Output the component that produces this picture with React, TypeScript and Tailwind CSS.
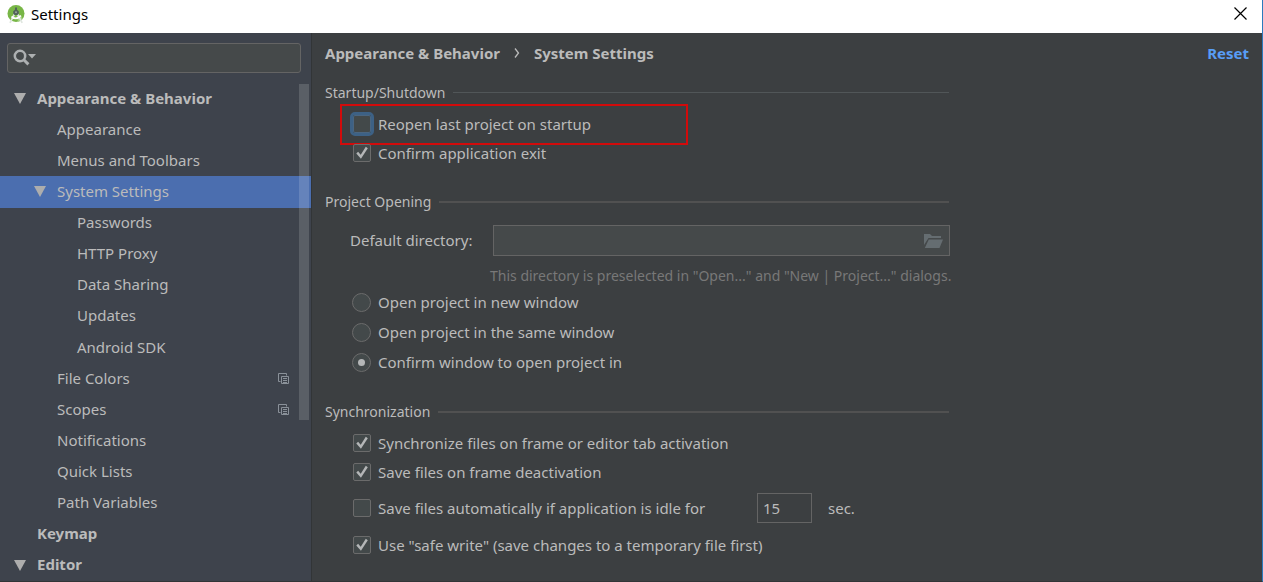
import { useState, type ReactNode } from "react";

type TreeItem = {
  label: string;
  level: 0 | 1 | 2;
  open?: boolean;
  selected?: boolean;
  projectLevel?: boolean;
};

const TREE: TreeItem[] = [
  { label: "Appearance & Behavior", level: 0, open: true },
  { label: "Appearance", level: 1 },
  { label: "Menus and Toolbars", level: 1 },
  { label: "System Settings", level: 1, open: true, selected: true },
  { label: "Passwords", level: 2 },
  { label: "HTTP Proxy", level: 2 },
  { label: "Data Sharing", level: 2 },
  { label: "Updates", level: 2 },
  { label: "Android SDK", level: 2 },
  { label: "File Colors", level: 1, projectLevel: true },
  { label: "Scopes", level: 1, projectLevel: true },
  { label: "Notifications", level: 1 },
  { label: "Quick Lists", level: 1 },
  { label: "Path Variables", level: 1 },
  { label: "Keymap", level: 0 },
  { label: "Editor", level: 0, open: true },
];

const INDENT = {
  0: "pl-[14px] font-bold",
  1: "pl-[34px]",
  2: "pl-[54px]",
};

function AndroidStudioIcon() {
  return (
    <svg width="18" height="20" viewBox="0 0 18 20" aria-hidden="true">
      <circle cx="9" cy="9.500" r="8.500" fill="#78b646" />
      <path d="m9 8 7 6.500A8.500 8.500 0 0 1 11 17.800z" fill="#a5d283" />
      <path d="M7.800 9.500 3 18.800M10.200 9.500l5 9.300" stroke="#dfe6df" strokeWidth="1.700" />
      <path d="M4.500 12.500q4.500 4.200 9.500-.8" stroke="#fff" strokeWidth="1.800" fill="none" />
      <path d="M8 3.500h2v2.200l1.800 1.600v2.200L10.500 11h-3L6.200 9.500V7.300L8 5.700z" fill="#52635a" />
      <circle cx="9" cy="8.200" r="1" fill="#9ba79c" />
    </svg>
  );
}

function SearchIcon() {
  return (
    <svg width="24" height="18" viewBox="0 0 24 18" aria-hidden="true">
      <circle cx="7" cy="7" r="5.2" fill="none" stroke="#adb0b1" strokeWidth="2.5" />
      <path d="m10.800 10.800 4.600 4.600" stroke="#adb0b1" strokeWidth="3" />
      <path d="M15 5h8l-4 4.400z" fill="#adb0b1" />
    </svg>
  );
}

function CopyIcon() {
  return (
    <svg width="12" height="12" viewBox="0 0 12 12" fill="none" stroke="#8a9199" aria-hidden="true">
      <path d="M2.500 8.500h-2v-8h8v2" />
      <path d="M3.500 3.500h7v7h-7z" />
      <path d="M5 5.500h4M5 7.500h4M5 9.500h4" />
    </svg>
  );
}

function FolderIcon() {
  return (
    <svg width="20" height="16" viewBox="0 0 20 16" fill="#656d71" aria-hidden="true">
      <path d="M0 12V1h6l2 2h9v2H4.500z" />
      <path d="M4.800 6.500H19L15.500 15H.8z" />
    </svg>
  );
}

function Check({
  label,
  initial = false,
  focused = false,
}: {
  label: string;
  initial?: boolean;
  focused?: boolean;
}) {
  const [checked, setChecked] = useState(initial);
  return (
    <label className="flex items-center gap-[7px]">
      <span className="grid size-[18px] shrink-0">
        <input
          type="checkbox"
          checked={checked}
          onChange={(e) => setChecked(e.target.checked)}
          className={
            focused
              ? "col-start-1 row-start-1 size-[18px] appearance-none rounded-[2px] border border-[#4a6580] bg-[#43494a] outline-3 outline-[#3d6185]"
              : "col-start-1 row-start-1 size-[18px] appearance-none rounded-[2px] border border-[#6b6b6b] bg-[#43494a] outline-none"
          }
        />
        {checked && (
          <svg
            viewBox="0 0 18 18"
            className="pointer-events-none col-start-1 row-start-1 size-[18px]"
            fill="none"
            stroke="#b4b6b7"
            strokeWidth="2.400"
            aria-hidden="true"
          >
            <path d="m4.200 8.600 3.600 4.200 6-9.300" />
          </svg>
        )}
      </span>
      {label}
    </label>
  );
}

function Section({ title, thick = false, children }: { title: string; thick?: boolean; children: ReactNode }) {
  return (
    <section aria-label={title}>
      <div className="flex h-[22px] max-w-[624px] items-center gap-2">
        <h2 className="text-sm">{title}</h2>
        <span className={thick ? "mb-px h-[2px] flex-1 bg-[#515151]" : "mb-px h-px flex-1 bg-[#515658]"} />
      </div>
      {children}
    </section>
  );
}

const OPEN_MODES = [
  "Open project in new window",
  "Open project in the same window",
  "Confirm window to open project in",
];

export default function App() {
  const [mode, setMode] = useState(2);
  return (
    <div className="flex min-h-screen flex-col border-r border-b border-r-[#2b7bbd] border-b-[#323537] bg-[#3c3f41] font-['Noto_Sans',sans-serif] text-[15px] leading-5 text-[#bbbbbb]">
      <header className="flex h-[33px] items-center bg-white pr-[15px] pb-[6px] pl-[7px] text-black">
        <div className="flex flex-1 items-center gap-[6px]">
          <AndroidStudioIcon />
          <h1>Settings</h1>
        </div>
        <button type="button" aria-label="Close">
          <svg width="13" height="13" viewBox="0 0 13 13" stroke="#000" strokeWidth="1.200" aria-hidden="true">
            <path d="m.5.5 12 12M12.500.5l-12 12" />
          </svg>
        </button>
      </header>

      <div className="flex flex-1">
        <aside className="flex w-[312px] shrink-0 flex-col border-r border-[#323537] bg-[#3e434c]">
          <div className="mt-[10px] mr-[10px] ml-[7px] flex h-[30px] items-center rounded-[3px] border border-[#646464] bg-[#45494a] pl-[5px]">
            <SearchIcon />
            <input
              type="search"
              aria-label="Search settings"
              className="min-w-0 flex-1 bg-transparent px-1 outline-none"
            />
          </div>
          <nav aria-label="Settings categories" className="relative mt-[10px] grid flex-1 auto-rows-fr">
            {TREE.map((item) => (
              <a
                key={item.label}
                href="#"
                aria-current={item.selected ? "page" : undefined}
                className={`flex items-center pr-[21px] ${INDENT[item.level]} ${item.selected ? "bg-[#4b6eaf]" : ""}`}
              >
                <span className="w-[23px] shrink-0">
                  {item.open && (
                    <svg width="12" height="11" viewBox="0 0 12 11" fill="#adadad" aria-hidden="true">
                      <path d="M0 0h12L6 11z" />
                    </svg>
                  )}
                </span>
                <span className="flex-1 pb-[2px]">{item.label}</span>
                {item.projectLevel && <CopyIcon />}
              </a>
            ))}
            <div className="absolute top-px right-[2px] h-[336px] w-[10px] bg-white/15" />
          </nav>
        </aside>

        <main className="flex-1 pr-[13px] pl-[13px]">
          <div className="flex h-[40px] items-center justify-between font-bold">
            <nav aria-label="Breadcrumb" className="flex items-center gap-[14px]">
              <span>Appearance &amp; Behavior</span>
              <svg width="6" height="10" viewBox="0 0 6 10" fill="none" stroke="#bbb" strokeWidth="1.300" aria-hidden="true">
                <path d="m1 .5 3.500 4.500L1 9.500" />
              </svg>
              <span>System Settings</span>
            </nav>
            <button type="button" className="text-[#589df6]">
              Reset
            </button>
          </div>

          <div className="flex flex-col pt-[9px]">
            <Section title="Startup/Shutdown">
              <div className="ml-[15px] flex h-[41px] max-w-[348px] items-center border-2 border-[#d20b0b] pb-px pl-[11px]">
                <Check label="Reopen last project on startup" focused />
              </div>
              <div className="flex h-4 items-center pl-[28px]">
                <Check label="Confirm application exit" initial />
              </div>
            </Section>

            <div className="pt-[30px]">
              <Section title="Project Opening" thick>
                <div className="mt-3 flex max-w-[625px] items-center pl-[25px]">
                  <label htmlFor="directory" className="w-[143px] pb-[2px]">
                    Default directory:
                  </label>
                  <div className="flex h-[31px] flex-1 items-center border border-[#646464] bg-[#45494a] pr-[5px]">
                    <input id="directory" className="min-w-0 flex-1 bg-transparent px-2 outline-none" />
                    <button type="button" aria-label="Browse">
                      <FolderIcon />
                    </button>
                  </div>
                </div>
                <p className="mt-[10px] mb-px pl-[165px] text-sm leading-5 text-[#787878]">
                  This directory is preselected in "Open..." and "New | Project..." dialogs.
                </p>
                <div role="radiogroup" aria-label="Open project" className="pl-[27px]">
                  {OPEN_MODES.map((label, i) => (
                    <label key={label} className="flex h-[30px] items-center gap-[7px]">
                      <span className="grid size-[19px] shrink-0 place-items-center">
                        <input
                          type="radio"
                          name="open-mode"
                          checked={mode === i}
                          onChange={() => setMode(i)}
                          className="col-start-1 row-start-1 size-[19px] appearance-none rounded-full border border-[#6b6b6b] bg-[#43494a]"
                        />
                        {mode === i && (
                          <span className="pointer-events-none col-start-1 row-start-1 size-[7px] rounded-full bg-[#b4b6b7]" />
                        )}
                      </span>
                      {label}
                    </label>
                  ))}
                </div>
              </Section>
            </div>

            <div className="pt-6">
              <Section title="Synchronization" thick>
                <div className="flex flex-col pt-[5px] pl-[28px]">
                  <div className="flex h-[30px] items-center">
                    <Check label="Synchronize files on frame or editor tab activation" initial />
                  </div>
                  <div className="flex h-7 items-center">
                    <Check label="Save files on frame deactivation" initial />
                  </div>
                  <div className="flex h-11 items-center">
                    <div className="w-[404px]">
                      <Check label="Save files automatically if application is idle for" />
                    </div>
                    <input
                      aria-label="Idle seconds"
                      defaultValue="15"
                      className="h-[30px] w-[55px] border border-[#646464] bg-transparent px-[5px] outline-none"
                    />
                    <span className="pl-4">sec.</span>
                  </div>
                  <div className="flex h-[30px] items-center">
                    <Check label={'Use "safe write" (save changes to a temporary file first)'} initial />
                  </div>
                </div>
              </Section>
            </div>
          </div>
        </main>
      </div>
    </div>
  );
}
